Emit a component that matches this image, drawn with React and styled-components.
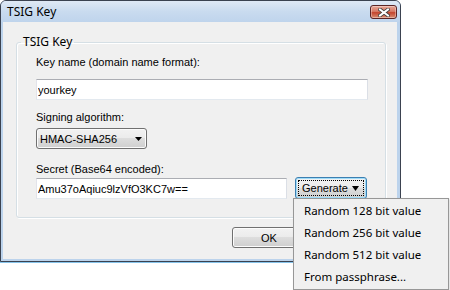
import React from 'react'
import styled, { createGlobalStyle } from 'styled-components'

const GlobalStyle = createGlobalStyle`
  html, body {
    margin: 0;
    padding: 0;
    background: #ffffff;
  }
  body {
    width: 450px;
    height: 290px;
    overflow: hidden;
    font-family: "Liberation Sans", Arial, sans-serif;
  }
`

const Window = styled.div`
  width: 401px;
  height: 262px;
  box-sizing: border-box;
  border: 1px solid #3b4250;
  border-radius: 6px 6px 0 0;
  background: #bcd3ec;
  display: flex;
  flex-direction: column;
  box-shadow: 0 1px 0 #86c3ea;
`

const TitleBar = styled.div`
  height: 21px;
  flex: none;
  display: flex;
  justify-content: space-between;
  align-items: flex-start;
  padding: 0 3px 0 6px;
  border-radius: 5px 5px 0 0;
  background: linear-gradient(#dfe9f5, #c9dbef 50%, #bfd4ec);
`

const Title = styled.span`
  font-family: "Noto Sans", "Open Sans", sans-serif;
  font-size: 12px;
  line-height: 20px;
  margin-top: 1px;
  color: #000;
`

const CloseButton = styled.div`
  width: 27px;
  height: 14px;
  margin-top: 4px;
  box-sizing: border-box;
  border: 1px solid #5b2424;
  border-radius: 3px;
  display: flex;
  align-items: center;
  justify-content: center;
  background: linear-gradient(#e8a797, #d77a66 45%, #c4452e 55%, #d98d72);
  box-shadow: inset 0 0 0 1px rgba(255, 255, 255, 0.35);
`

const Client = styled.div`
  flex: 1;
  margin: 0 3px 2px 2px;
  background: #f0f0f0;
  display: flex;
  flex-direction: column;
`

const GroupBox = styled.fieldset`
  margin: 13px 11px 0 13px;
  padding: 0;
  min-width: 0;
  border: 1px solid #d5dfe5;
  border-radius: 3px;
  box-shadow: inset 1px 1px 0 #ffffff, 1px 1px 0 #ffffff;
`

const Legend = styled.legend`
  margin-left: 4px;
  padding: 0 2px;
  font-family: "Noto Sans", "Open Sans", sans-serif;
  font-size: 12px;
  line-height: 14px;
  color: #000;
`

const GroupBody = styled.div`
  padding: 7px 17px 18px 19px;
  display: flex;
  flex-direction: column;
`

const Field = styled.div`
  margin-top: ${({ $top }) => $top || 0}px;
  display: flex;
  flex-direction: column;
  align-items: flex-start;
`

const Label = styled.label`
  display: block;
  font-size: 11px;
  line-height: 13px;
  color: #000;
  margin-bottom: ${({ $gap }) => $gap}px;
`

const TextBox = styled.input`
  width: ${({ $width }) => $width}px;
  height: 21px;
  box-sizing: border-box;
  margin: 0;
  padding: 0 1px;
  border: 1px solid;
  border-color: #abadb3 #dbdfe6 #e3e9ef #e2e3ea;
  background: #fff;
  font-family: "Liberation Sans", Arial, sans-serif;
  font-size: 11px;
  color: #000;
  outline: none;
`

const Combo = styled.div`
  width: 111px;
  height: 21px;
  box-sizing: border-box;
  border: 1px solid #707070;
  border-radius: 3px;
  padding: 0 4px 0 3px;
  display: flex;
  align-items: center;
  justify-content: space-between;
  background: linear-gradient(#f2f2f2, #ebebeb 50%, #dddddd 50%, #cfcfcf);
  box-shadow: inset 0 0 0 1px #fbfbfb;
  font-size: 11px;
  color: #000;
`

const Row = styled.div`
  display: flex;
  align-items: flex-start;
  gap: 8px;
`

const MenuAnchor = styled.div`
  position: relative;
  margin-top: -1px;
`

const WinButton = styled.div`
  width: ${({ $width }) => $width}px;
  height: ${({ $height }) => $height || 21}px;
  box-sizing: border-box;
  position: relative;
  border: 1px solid ${({ $focused }) => ($focused ? '#3c7fb1' : '#707070')};
  border-radius: 3px;
  display: flex;
  align-items: center;
  justify-content: ${({ $split }) => ($split ? 'space-between' : 'center')};
  padding: 0 7px 0 6px;
  background: linear-gradient(#f2f2f2, #ebebeb 50%, #dddddd 50%, #cfcfcf);
  box-shadow: inset 0 0 0 1px ${({ $focused }) => ($focused ? '#9fdcf9' : '#fcfcfc')};
  font-size: 11px;
  color: #000;

  &::after {
    content: '';
    display: ${({ $focused }) => ($focused ? 'block' : 'none')};
    position: absolute;
    inset: 2px;
    border: 1px dotted #000;
  }
`

const Buttons = styled.div`
  display: flex;
  justify-content: flex-end;
  margin-top: 9px;
  padding-right: 90px;
`

const Menu = styled.ul`
  position: absolute;
  top: 21px;
  left: -2px;
  z-index: 10;
  width: 156px;
  height: 92px;
  box-sizing: border-box;
  margin: 0;
  padding: 1px;
  list-style: none;
  background: #f0f0f0;
  border: 1px solid #979797;
  box-shadow: 1px 1px 2px rgba(0, 0, 0, 0.15);
`

const MenuItem = styled.li`
  height: 22px;
  line-height: 22px;
  padding-left: 9px;
  font-family: "Noto Sans", "Open Sans", sans-serif;
  font-size: 11.5px;
  color: #000;
  white-space: nowrap;
`

const Arrow = ({ w, h }) => (
  <svg width={w} height={h} viewBox={`0 0 ${w} ${h}`}>
    <polygon points={`0,0 ${w},0 ${w / 2},${h}`} fill="#000" />
  </svg>
)

const CloseGlyph = () => (
  <svg width="12" height="9" viewBox="0 0 12 9">
    <path d="M2 1.5 L10 7.5 M10 1.5 L2 7.5" stroke="#3d3d3d" strokeWidth="3.6" strokeLinecap="square" />
    <path d="M2 1.5 L10 7.5 M10 1.5 L2 7.5" stroke="#ffffff" strokeWidth="2" strokeLinecap="square" />
  </svg>
)

const menuItems = [
  'Random 128 bit value',
  'Random 256 bit value',
  'Random 512 bit value',
  'From passphrase...',
]

const App = () => {
  return (
    <>
      <GlobalStyle />
      <Window>
        <TitleBar>
          <Title>TSIG Key</Title>
          <CloseButton>
            <CloseGlyph />
          </CloseButton>
        </TitleBar>
        <Client>
          <GroupBox>
            <Legend>TSIG Key</Legend>
            <GroupBody>
              <Field>
                <Label $gap={10}>Key name (domain name format):</Label>
                <TextBox $width={332} defaultValue="yourkey" readOnly />
              </Field>
              <Field $top={11}>
                <Label $gap={4}>Signing algorithm:</Label>
                <Combo>
                  <span>HMAC-SHA256</span>
                  <Arrow w={7} h={4} />
                </Combo>
              </Field>
              <Field $top={14}>
                <Label $gap={2}>Secret (Base64 encoded):</Label>
                <Row>
                  <TextBox $width={251} defaultValue="Amu37oAqiuc9lzVfO3KC7w==" readOnly />
                  <MenuAnchor>
                    <WinButton $width={72} $height={22} $focused $split>
                      <span>Generate</span>
                      <Arrow w={7} h={5} />
                    </WinButton>
                    <Menu>
                      {menuItems.map(item => (
                        <MenuItem key={item}>{item}</MenuItem>
                      ))}
                    </Menu>
                  </MenuAnchor>
                </Row>
              </Field>
            </GroupBody>
          </GroupBox>
          <Buttons>
            <WinButton $width={75}>OK</WinButton>
          </Buttons>
        </Client>
      </Window>
    </>
  )
}

export default App
